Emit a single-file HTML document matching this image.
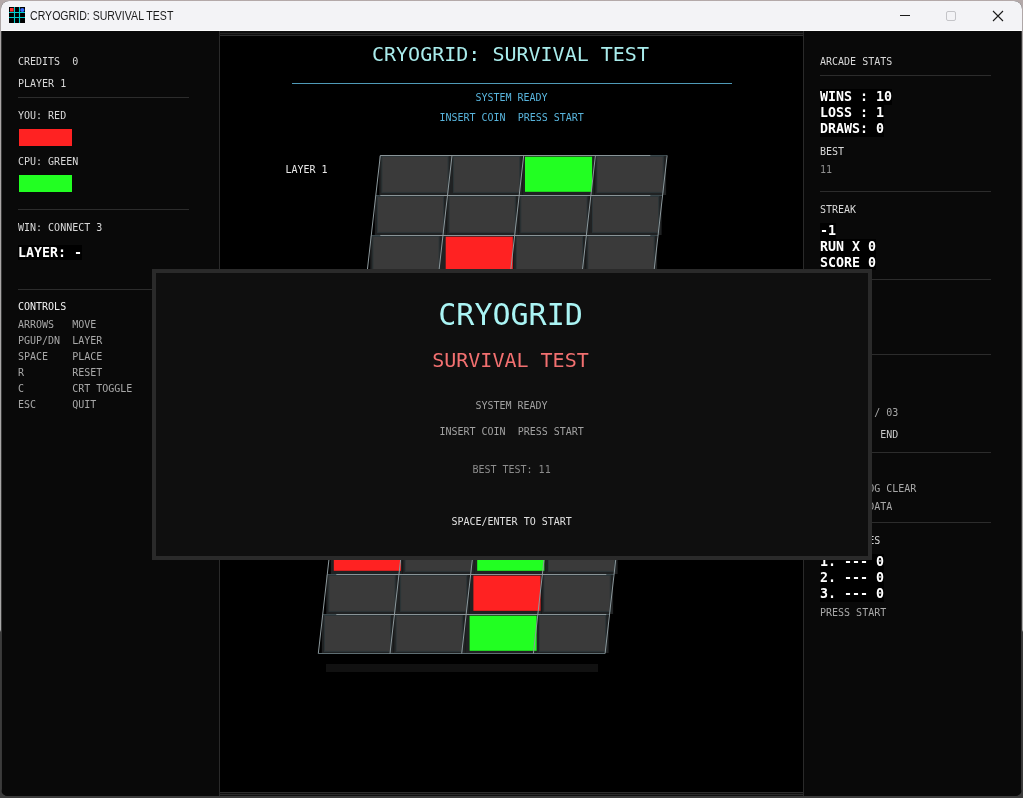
<!DOCTYPE html>
<html lang="en"><head><meta charset="utf-8"><title>CRYOGRID: SURVIVAL TEST</title>
<style>

html,body{margin:0;padding:0}
body{width:1023px;height:798px;overflow:hidden;position:relative;background:linear-gradient(to bottom,#b4a9a9 0,#aaa6a6 40px,#a8a8a8 630px,#3c3c3c 632px,#3c3c3c 100%);font-family:"DejaVu Sans Mono","Liberation Mono",monospace}
#win{position:absolute;left:1px;top:1px;width:1021px;height:795px;border-radius:8px 8px 7px 7px;overflow:hidden;background:#090909}
#titlebar{position:absolute;left:0;top:0;width:1021px;height:30px;will-change:transform;background:#f3f3f6;border-bottom:1px solid #fdfdfd;box-sizing:border-box}
#titlebar .ttl{position:absolute;left:29px;top:7px;font:12.5px/16px "Liberation Sans",sans-serif;color:#1b1b1b;white-space:pre;transform-origin:0 50%;transform:scaleX(0.846)}
#app{position:absolute;left:0;top:30px;width:1021px;height:765px;background:#090909;will-change:transform}
.panel{position:absolute;top:0;height:765px;background:#090909}
#left{left:0;width:218px}
#right{left:803px;width:218px}
#stage{position:absolute;left:218px;top:0;width:585px;height:765px;background:#101010;box-sizing:border-box;border-left:1px solid #2a2a2a;border-right:1px solid #2a2a2a}
#stage .o1{position:absolute;left:0;top:2px;width:583px;height:762px;border-top:1px solid #242424;border-bottom:1px solid #2a2a2a;box-sizing:border-box;background:#101010}
#canvas{position:absolute;left:0;top:4px;width:583px;height:758px;background:#000;border-top:1px solid #2e2e2e;border-bottom:1px solid #2e2e2e;box-sizing:border-box}
.t,.b{position:absolute;white-space:pre;margin:0}
.s10{font-size:10px;line-height:10px}
.s20{font-size:20px;line-height:20px}
.s30{font-size:30px;line-height:30px}
.b{font-size:13.3px;line-height:15px;height:15px;font-weight:bold;color:#fff;background:#000}
.sep{position:absolute;height:1px}
.edge{position:absolute;top:0;width:1px;height:765px;background:#383838}
.sw{position:absolute;width:53.2px;height:17px}
#overlay{position:absolute;left:151px;top:238px;width:720px;height:291px;box-sizing:border-box;border:4px solid #2a2a2a;background:#0f0f0f}
svg{position:absolute;left:0;top:0}

</style></head><body>
<div id="win">
<div id="titlebar">
<svg width="16" height="16" style="left:8px;top:6px" viewBox="0 0 16 16"><rect width="16" height="16" fill="#000"/><path d="M5.5 0V16M10.5 0V16M0 5.5H16M0 10.5H16" stroke="#00cccc" stroke-width="1.1"/><rect x="1" y="1" width="3.6" height="3.6" fill="#ff3030"/><circle cx="13.3" cy="3" r="2.1" fill="#3a6cff"/></svg>
<div class="ttl">CRYOGRID: SURVIVAL TEST</div>
<svg width="140" height="30" style="left:881px;top:0" viewBox="0 0 140 30"><path d="M18 14.5H28" stroke="#1a1a1a" stroke-width="1"/><rect x="64.5" y="10.5" width="9" height="9" rx="1.5" fill="none" stroke="#c4c4c8" stroke-width="1"/><path d="M111 10L121 20M121 10L111 20" stroke="#1a1a1a" stroke-width="1.1"/></svg>
</div>
<div id="app">
<div id="stage"><div class="o1"></div><div id="canvas"></div></div>
<div class="panel" id="left"></div>
<div class="t s10" style="left:17px;top:26px;color:#d8d8d8;">CREDITS  0</div>
<div class="t s10" style="left:17px;top:48px;color:#d8d8d8;">PLAYER 1</div>
<div class="sep" style="left:17px;top:66px;width:171px;background:#2c2c2c"></div>
<div class="t s10" style="left:17px;top:80px;color:#d8d8d8;">YOU: RED</div>
<div class="sw" style="left:17.6px;top:98px;background:#ff2222"></div>
<div class="t s10" style="left:17px;top:126px;color:#d8d8d8;">CPU: GREEN</div>
<div class="sw" style="left:17.6px;top:144px;background:#22ff22"></div>
<div class="sep" style="left:17px;top:178px;width:171px;background:#2c2c2c"></div>
<div class="t s10" style="left:17px;top:192px;color:#d8d8d8;">WIN: CONNECT 3</div>
<div class="b" style="left:17px;top:214px;height:15px">LAYER: -</div>
<div class="sep" style="left:17px;top:258px;width:171px;background:#2c2c2c"></div>
<div class="t s10" style="left:17px;top:271px;color:#f0f0f0;">CONTROLS</div>
<div class="t s10" style="left:17px;top:289px;color:#a8a8a8;">ARROWS   MOVE</div>
<div class="t s10" style="left:17px;top:305px;color:#a8a8a8;">PGUP/DN  LAYER</div>
<div class="t s10" style="left:17px;top:321px;color:#a8a8a8;">SPACE    PLACE</div>
<div class="t s10" style="left:17px;top:337px;color:#a8a8a8;">R        RESET</div>
<div class="t s10" style="left:17px;top:353px;color:#a8a8a8;">C        CRT TOGGLE</div>
<div class="t s10" style="left:17px;top:369px;color:#a8a8a8;">ESC      QUIT</div>
<div class="panel" id="right" style="background:none"></div>
<div class="t s10" style="left:819px;top:26px;color:#d8d8d8;">ARCADE STATS</div>
<div class="sep" style="left:819px;top:44px;width:171px;background:#2c2c2c"></div>
<div class="b" style="left:819px;top:58px;height:16px">WINS : 10</div>
<div class="b" style="left:819px;top:74px;height:16px">LOSS : 1</div>
<div class="b" style="left:819px;top:90px;height:15.5px">DRAWS: 0</div>
<div class="t s10" style="left:819px;top:116px;color:#d8d8d8;">BEST</div>
<div class="t s10" style="left:819px;top:134px;color:#909090;">11</div>
<div class="sep" style="left:819px;top:160px;width:171px;background:#2c2c2c"></div>
<div class="t s10" style="left:819px;top:174px;color:#d8d8d8;">STREAK</div>
<div class="b" style="left:819px;top:192px;height:16px">-1</div>
<div class="b" style="left:819px;top:208px;height:16px">RUN X 0</div>
<div class="b" style="left:819px;top:224px;height:15px">SCORE 0</div>
<div class="sep" style="left:819px;top:248px;width:171px;background:#2c2c2c"></div>
<div class="t s10" style="left:819px;top:262px;color:#d8d8d8;">LEVEL</div>
<div class="sep" style="left:819px;top:323px;width:171px;background:#2c2c2c"></div>
<div class="t s10" style="left:819px;top:337px;color:#d8d8d8;">LAYER</div>
<div class="t s10" style="left:819px;top:377px;color:#a8a8a8;">LAYER 01 / 03</div>
<div class="t s10" style="left:819px;top:399px;color:#c8c8c8;">HOME      END</div>
<div class="sep" style="left:819px;top:421px;width:171px;background:#2c2c2c"></div>
<div class="t s10" style="left:819px;top:435px;color:#d8d8d8;">MESSAGE</div>
<div class="t s10" style="left:819px;top:453px;color:#a8a8a8;">SYSTEM LOG CLEAR</div>
<div class="t s10" style="left:819px;top:471px;color:#a8a8a8;">NO TEST DATA</div>
<div class="sep" style="left:819px;top:491px;width:171px;background:#2c2c2c"></div>
<div class="t s10" style="left:819px;top:505px;color:#d8d8d8;">TOP SCORES</div>
<div class="b" style="left:819px;top:523px;height:16px">1. --- 0</div>
<div class="b" style="left:819px;top:539px;height:16px">2. --- 0</div>
<div class="b" style="left:819px;top:555px;height:15.5px">3. --- 0</div>
<div class="t s10" style="left:819px;top:577px;color:#a8a8a8;">PRESS START</div>
<div class="t s20" style="left:371px;top:13px;color:#a9ecec;">CRYOGRID: SURVIVAL TEST</div>
<div class="sep" style="left:291px;top:52px;width:440px;background:#4f9ab8"></div>
<div class="t s10" style="left:474.4px;top:62px;color:#58b4dc;">SYSTEM READY</div>
<div class="t s10" style="left:438.4px;top:82px;color:#58b4dc;">INSERT COIN  PRESS START</div>
<div class="t s10" style="left:284.4px;top:134px;color:#e8e8e8;">LAYER 1</div>
<div class="t s10" style="left:262.4px;top:303px;color:#e8e8e8;">LAYER 2</div>
<div class="t s10" style="left:240.4px;top:472px;color:#e8e8e8;">LAYER 3</div>
<svg width="1021" height="765" viewBox="1 31 1021 765" shape-rendering="auto">
<rect x="379.3" y="156.0" width="71.7" height="39.0" fill="#202223"/>
<rect x="381.9" y="156.5" width="66.2" height="35.9" fill="#3a3a3a" stroke="#2c3538" stroke-width="1"/>
<rect x="451.0" y="156.0" width="71.7" height="39.0" fill="#202223"/>
<rect x="453.6" y="156.5" width="66.2" height="35.9" fill="#3a3a3a" stroke="#2c3538" stroke-width="1"/>
<rect x="522.7" y="156.0" width="71.7" height="39.0" fill="#202223"/>
<rect x="525.0" y="156.7" width="67.1" height="35.1" fill="#22ff22"/>
<rect x="594.4" y="156.0" width="71.7" height="39.0" fill="#202223"/>
<rect x="597.0" y="156.5" width="66.2" height="35.9" fill="#3a3a3a" stroke="#2c3538" stroke-width="1"/>
<rect x="374.8" y="196.0" width="71.7" height="39.0" fill="#202223"/>
<rect x="377.4" y="196.5" width="66.2" height="35.9" fill="#3a3a3a" stroke="#2c3538" stroke-width="1"/>
<rect x="446.5" y="196.0" width="71.7" height="39.0" fill="#202223"/>
<rect x="449.1" y="196.5" width="66.2" height="35.9" fill="#3a3a3a" stroke="#2c3538" stroke-width="1"/>
<rect x="518.2" y="196.0" width="71.7" height="39.0" fill="#202223"/>
<rect x="520.8" y="196.5" width="66.2" height="35.9" fill="#3a3a3a" stroke="#2c3538" stroke-width="1"/>
<rect x="589.9" y="196.0" width="71.7" height="39.0" fill="#202223"/>
<rect x="592.5" y="196.5" width="66.2" height="35.9" fill="#3a3a3a" stroke="#2c3538" stroke-width="1"/>
<rect x="370.3" y="236.0" width="71.7" height="39.0" fill="#202223"/>
<rect x="372.9" y="236.5" width="66.2" height="35.9" fill="#3a3a3a" stroke="#2c3538" stroke-width="1"/>
<rect x="442.0" y="236.0" width="71.7" height="39.0" fill="#202223"/>
<rect x="445.7" y="236.7" width="67.1" height="35.1" fill="#ff2222"/>
<rect x="513.7" y="236.0" width="71.7" height="39.0" fill="#202223"/>
<rect x="516.3" y="236.5" width="66.2" height="35.9" fill="#3a3a3a" stroke="#2c3538" stroke-width="1"/>
<rect x="585.4" y="236.0" width="71.7" height="39.0" fill="#202223"/>
<rect x="588.0" y="236.5" width="66.2" height="35.9" fill="#3a3a3a" stroke="#2c3538" stroke-width="1"/>
<rect x="365.8" y="276.0" width="71.7" height="38.0" fill="#202223"/>
<rect x="368.4" y="276.5" width="66.2" height="35.9" fill="#3a3a3a" stroke="#2c3538" stroke-width="1"/>
<rect x="437.5" y="276.0" width="71.7" height="38.0" fill="#202223"/>
<rect x="440.1" y="276.5" width="66.2" height="35.9" fill="#3a3a3a" stroke="#2c3538" stroke-width="1"/>
<rect x="509.2" y="276.0" width="71.7" height="38.0" fill="#202223"/>
<rect x="511.8" y="276.5" width="66.2" height="35.9" fill="#3a3a3a" stroke="#2c3538" stroke-width="1"/>
<rect x="580.9" y="276.0" width="71.7" height="38.0" fill="#202223"/>
<rect x="583.5" y="276.5" width="66.2" height="35.9" fill="#3a3a3a" stroke="#2c3538" stroke-width="1"/>
<path d="M380.3 155.5H667.1" stroke="#3b484c" stroke-width="1" fill="none"/>
<path d="M375.8 195.5H662.6" stroke="#3b484c" stroke-width="1" fill="none"/>
<path d="M371.3 235.5H658.1" stroke="#3b484c" stroke-width="1" fill="none"/>
<path d="M366.8 275.5H653.6" stroke="#3b484c" stroke-width="1" fill="none"/>
<path d="M380.3 155.5H650.3" stroke="#8a9497" stroke-width="1" fill="none"/>
<path d="M380.3 195.5H650.3" stroke="#8a9497" stroke-width="1" fill="none"/>
<path d="M380.3 235.5H650.3" stroke="#8a9497" stroke-width="1" fill="none"/>
<path d="M380.3 275.5H650.3" stroke="#8a9497" stroke-width="1" fill="none"/>
<path d="M362.3 314.5H649.1" stroke="#5f6e73" stroke-width="1" fill="none"/>
<path d="M380.3 155.5L362.3 314.5" stroke="#8d999d" stroke-width="1" fill="none"/>
<path d="M452.0 155.5L434.0 314.5" stroke="#8d999d" stroke-width="1" fill="none"/>
<path d="M523.7 155.5L505.7 314.5" stroke="#8d999d" stroke-width="1" fill="none"/>
<path d="M595.4 155.5L577.4 314.5" stroke="#8d999d" stroke-width="1" fill="none"/>
<path d="M667.1 155.5L649.1 314.5" stroke="#8d999d" stroke-width="1" fill="none"/>
<rect x="357.3" y="325.5" width="71.7" height="39.0" fill="#202223"/>
<rect x="359.9" y="326.0" width="66.2" height="35.9" fill="#3a3a3a" stroke="#2c3538" stroke-width="1"/>
<rect x="429.0" y="325.5" width="71.7" height="39.0" fill="#202223"/>
<rect x="431.6" y="326.0" width="66.2" height="35.9" fill="#3a3a3a" stroke="#2c3538" stroke-width="1"/>
<rect x="500.7" y="325.5" width="71.7" height="39.0" fill="#202223"/>
<rect x="503.3" y="326.0" width="66.2" height="35.9" fill="#3a3a3a" stroke="#2c3538" stroke-width="1"/>
<rect x="572.4" y="325.5" width="71.7" height="39.0" fill="#202223"/>
<rect x="575.0" y="326.0" width="66.2" height="35.9" fill="#3a3a3a" stroke="#2c3538" stroke-width="1"/>
<rect x="352.8" y="365.5" width="71.7" height="39.0" fill="#202223"/>
<rect x="355.4" y="366.0" width="66.2" height="35.9" fill="#3a3a3a" stroke="#2c3538" stroke-width="1"/>
<rect x="424.5" y="365.5" width="71.7" height="39.0" fill="#202223"/>
<rect x="427.5" y="366.2" width="67.1" height="35.1" fill="#22ff22"/>
<rect x="496.2" y="365.5" width="71.7" height="39.0" fill="#202223"/>
<rect x="498.8" y="366.0" width="66.2" height="35.9" fill="#3a3a3a" stroke="#2c3538" stroke-width="1"/>
<rect x="567.9" y="365.5" width="71.7" height="39.0" fill="#202223"/>
<rect x="570.5" y="366.0" width="66.2" height="35.9" fill="#3a3a3a" stroke="#2c3538" stroke-width="1"/>
<rect x="348.3" y="405.5" width="71.7" height="39.0" fill="#202223"/>
<rect x="350.9" y="406.0" width="66.2" height="35.9" fill="#3a3a3a" stroke="#2c3538" stroke-width="1"/>
<rect x="420.0" y="405.5" width="71.7" height="39.0" fill="#202223"/>
<rect x="422.6" y="406.0" width="66.2" height="35.9" fill="#3a3a3a" stroke="#2c3538" stroke-width="1"/>
<rect x="491.7" y="405.5" width="71.7" height="39.0" fill="#202223"/>
<rect x="495.4" y="406.2" width="67.1" height="35.1" fill="#ff2222"/>
<rect x="563.4" y="405.5" width="71.7" height="39.0" fill="#202223"/>
<rect x="566.0" y="406.0" width="66.2" height="35.9" fill="#3a3a3a" stroke="#2c3538" stroke-width="1"/>
<rect x="343.8" y="445.5" width="71.7" height="38.0" fill="#202223"/>
<rect x="346.4" y="446.0" width="66.2" height="35.9" fill="#3a3a3a" stroke="#2c3538" stroke-width="1"/>
<rect x="415.5" y="445.5" width="71.7" height="38.0" fill="#202223"/>
<rect x="418.1" y="446.0" width="66.2" height="35.9" fill="#3a3a3a" stroke="#2c3538" stroke-width="1"/>
<rect x="487.2" y="445.5" width="71.7" height="38.0" fill="#202223"/>
<rect x="489.8" y="446.0" width="66.2" height="35.9" fill="#3a3a3a" stroke="#2c3538" stroke-width="1"/>
<rect x="558.9" y="445.5" width="71.7" height="38.0" fill="#202223"/>
<rect x="561.5" y="446.0" width="66.2" height="35.9" fill="#3a3a3a" stroke="#2c3538" stroke-width="1"/>
<path d="M358.3 325.0H645.1" stroke="#3b484c" stroke-width="1" fill="none"/>
<path d="M353.8 365.0H640.6" stroke="#3b484c" stroke-width="1" fill="none"/>
<path d="M349.3 405.0H636.1" stroke="#3b484c" stroke-width="1" fill="none"/>
<path d="M344.8 445.0H631.6" stroke="#3b484c" stroke-width="1" fill="none"/>
<path d="M358.3 325.0H628.3" stroke="#8a9497" stroke-width="1" fill="none"/>
<path d="M358.3 365.0H628.3" stroke="#8a9497" stroke-width="1" fill="none"/>
<path d="M358.3 405.0H628.3" stroke="#8a9497" stroke-width="1" fill="none"/>
<path d="M358.3 445.0H628.3" stroke="#8a9497" stroke-width="1" fill="none"/>
<path d="M340.3 484.0H627.1" stroke="#5f6e73" stroke-width="1" fill="none"/>
<path d="M358.3 325.0L340.3 484.0" stroke="#8d999d" stroke-width="1" fill="none"/>
<path d="M430.0 325.0L412.0 484.0" stroke="#8d999d" stroke-width="1" fill="none"/>
<path d="M501.7 325.0L483.7 484.0" stroke="#8d999d" stroke-width="1" fill="none"/>
<path d="M573.4 325.0L555.4 484.0" stroke="#8d999d" stroke-width="1" fill="none"/>
<path d="M645.1 325.0L627.1 484.0" stroke="#8d999d" stroke-width="1" fill="none"/>
<rect x="335.3" y="495.0" width="71.7" height="39.0" fill="#202223"/>
<rect x="337.9" y="495.5" width="66.2" height="35.9" fill="#3a3a3a" stroke="#2c3538" stroke-width="1"/>
<rect x="407.0" y="495.0" width="71.7" height="39.0" fill="#202223"/>
<rect x="409.6" y="495.5" width="66.2" height="35.9" fill="#3a3a3a" stroke="#2c3538" stroke-width="1"/>
<rect x="478.7" y="495.0" width="71.7" height="39.0" fill="#202223"/>
<rect x="481.3" y="495.5" width="66.2" height="35.9" fill="#3a3a3a" stroke="#2c3538" stroke-width="1"/>
<rect x="550.4" y="495.0" width="71.7" height="39.0" fill="#202223"/>
<rect x="553.0" y="495.5" width="66.2" height="35.9" fill="#3a3a3a" stroke="#2c3538" stroke-width="1"/>
<rect x="330.8" y="535.0" width="71.7" height="39.0" fill="#202223"/>
<rect x="333.8" y="535.7" width="67.1" height="35.1" fill="#ff2222"/>
<rect x="402.5" y="535.0" width="71.7" height="39.0" fill="#202223"/>
<rect x="405.1" y="535.5" width="66.2" height="35.9" fill="#3a3a3a" stroke="#2c3538" stroke-width="1"/>
<rect x="474.2" y="535.0" width="71.7" height="39.0" fill="#202223"/>
<rect x="477.2" y="535.7" width="67.1" height="35.1" fill="#22ff22"/>
<rect x="545.9" y="535.0" width="71.7" height="39.0" fill="#202223"/>
<rect x="548.5" y="535.5" width="66.2" height="35.9" fill="#3a3a3a" stroke="#2c3538" stroke-width="1"/>
<rect x="326.3" y="575.0" width="71.7" height="39.0" fill="#202223"/>
<rect x="328.9" y="575.5" width="66.2" height="35.9" fill="#3a3a3a" stroke="#2c3538" stroke-width="1"/>
<rect x="398.0" y="575.0" width="71.7" height="39.0" fill="#202223"/>
<rect x="400.6" y="575.5" width="66.2" height="35.9" fill="#3a3a3a" stroke="#2c3538" stroke-width="1"/>
<rect x="469.7" y="575.0" width="71.7" height="39.0" fill="#202223"/>
<rect x="473.4" y="575.7" width="67.1" height="35.1" fill="#ff2222"/>
<rect x="541.4" y="575.0" width="71.7" height="39.0" fill="#202223"/>
<rect x="544.0" y="575.5" width="66.2" height="35.9" fill="#3a3a3a" stroke="#2c3538" stroke-width="1"/>
<rect x="321.8" y="615.0" width="71.7" height="38.0" fill="#202223"/>
<rect x="324.4" y="615.5" width="66.2" height="35.9" fill="#3a3a3a" stroke="#2c3538" stroke-width="1"/>
<rect x="393.5" y="615.0" width="71.7" height="38.0" fill="#202223"/>
<rect x="396.1" y="615.5" width="66.2" height="35.9" fill="#3a3a3a" stroke="#2c3538" stroke-width="1"/>
<rect x="465.2" y="615.0" width="71.7" height="38.0" fill="#202223"/>
<rect x="469.6" y="615.7" width="67.1" height="35.1" fill="#22ff22"/>
<rect x="536.9" y="615.0" width="71.7" height="38.0" fill="#202223"/>
<rect x="539.5" y="615.5" width="66.2" height="35.9" fill="#3a3a3a" stroke="#2c3538" stroke-width="1"/>
<path d="M336.3 494.5H623.1" stroke="#3b484c" stroke-width="1" fill="none"/>
<path d="M331.8 534.5H618.6" stroke="#3b484c" stroke-width="1" fill="none"/>
<path d="M327.3 574.5H614.1" stroke="#3b484c" stroke-width="1" fill="none"/>
<path d="M322.8 614.5H609.6" stroke="#3b484c" stroke-width="1" fill="none"/>
<path d="M336.3 494.5H606.3" stroke="#8a9497" stroke-width="1" fill="none"/>
<path d="M336.3 534.5H606.3" stroke="#8a9497" stroke-width="1" fill="none"/>
<path d="M336.3 574.5H606.3" stroke="#8a9497" stroke-width="1" fill="none"/>
<path d="M336.3 614.5H606.3" stroke="#8a9497" stroke-width="1" fill="none"/>
<path d="M318.3 653.5H605.1" stroke="#5f6e73" stroke-width="1" fill="none"/>
<path d="M336.3 494.5L318.3 653.5" stroke="#8d999d" stroke-width="1" fill="none"/>
<path d="M408.0 494.5L390.0 653.5" stroke="#8d999d" stroke-width="1" fill="none"/>
<path d="M479.7 494.5L461.7 653.5" stroke="#8d999d" stroke-width="1" fill="none"/>
<path d="M551.4 494.5L533.4 653.5" stroke="#8d999d" stroke-width="1" fill="none"/>
<path d="M623.1 494.5L605.1 653.5" stroke="#8d999d" stroke-width="1" fill="none"/>
<rect x="326" y="664" width="272" height="8" fill="#111"/>
</svg>
<div id="overlay"></div>
<div class="t s30" style="left:437.3px;top:268.5px;color:#aaf4f4;">CRYOGRID</div>
<div class="t s20" style="left:431.2px;top:319px;color:#f27070;">SURVIVAL TEST</div>
<div class="t s10" style="left:474.4px;top:370px;color:#a0a0a0;">SYSTEM READY</div>
<div class="t s10" style="left:438.4px;top:396px;color:#a0a0a0;">INSERT COIN  PRESS START</div>
<div class="t s10" style="left:471.4px;top:434px;color:#8c8c8c;">BEST TEST: 11</div>
<div class="t s10" style="left:450.4px;top:486px;color:#e0e0e0;">SPACE/ENTER TO START</div>
<div class="edge" style="left:0"></div><div class="edge" style="left:1020px"></div>
</div>
</div>
</body></html>
